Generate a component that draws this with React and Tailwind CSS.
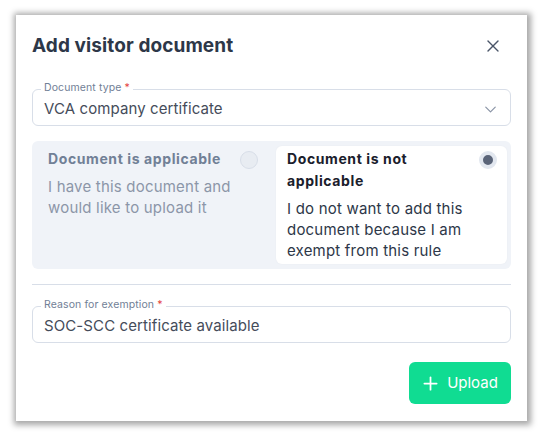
import { X, ChevronDown, Plus } from "lucide-react";

function OutlinedField({ label, value, chevron }) {
  return (
    <div className="relative">
      <div className="absolute -top-[7px] left-[9px] px-[3px] bg-white text-[10.5px] leading-[12px] text-[#718096] tracking-[0.1px]">
        {label} <span className="text-[#e53e3e]">*</span>
      </div>
      <div className="h-[37px] flex items-center justify-between border border-[#d8dee8] rounded-[6px] pl-[11px] pr-[10px] pt-[3px]">
        <span className="text-[15px] text-[#454c5a] tracking-[0.1px]">{value}</span>
        {chevron && <ChevronDown size={19} strokeWidth={1.5} className="text-[#8a94a6]" />}
      </div>
    </div>
  );
}

export default function App() {
  return (
    <div className="w-[542px] h-[435px] bg-white pt-[15px] pl-[16px]" style={{ fontFamily: "Inter, 'Open Sans', sans-serif" }}>
      <div className="w-[511px] h-[406px] bg-white shadow-[1px_1px_6px_3px_rgba(0,0,0,0.35)] px-[16px] pt-[18px]">
        {/* header */}
        <div className="flex items-center justify-between h-[26px]">
          <h1 className="text-[19px] font-bold text-[#2d3748] tracking-[0.1px]">Add visitor document</h1>
          <X size={20} strokeWidth={1.6} className="text-[#4a5568] mr-[8px]" />
        </div>

        <div className="mt-[30px]">
          <OutlinedField label="Document type" value="VCA company certificate" chevron />
        </div>

        {/* radio options */}
        <div className="mt-[15px] bg-[#f0f3f8] rounded-[6px] p-[5px] pr-[4px] flex gap-[6px] h-[128px]">
          <div className="flex-1 pl-[11px] pr-[12px] pt-[2px] flex justify-between">
            <div>
              <div className="text-[14px] font-bold text-[#718096] leading-[22px] tracking-[0.6px]">Document is applicable</div>
              <div className="mt-[6px] text-[15px] leading-[21px] text-[#8c96a8] tracking-[0.2px]">
                I have this document and would like to upload it
              </div>
            </div>
            <div className="w-[18px] h-[18px] rounded-full border border-[#d8dee8] bg-[#e8ecf2] shrink-0 mt-[3px]" />
          </div>
          <div className="w-[231px] bg-white rounded-[6px] pl-[11px] pr-[10px] pt-[2px] flex justify-between shadow-[0_0_2px_rgba(0,0,0,0.04)]">
            <div>
              <div className="text-[14px] font-bold text-[#1a202c] leading-[22px] tracking-[0.6px]">Document is not applicable</div>
              <div className="mt-[6px] text-[15px] leading-[21px] text-[#2d3748] tracking-[0.2px]">
                I do not want to add this document because I am exempt from this rule
              </div>
            </div>
            <div className="w-[18px] h-[18px] rounded-full border-[4px] border-[#e2e7ef] bg-[#5a6478] shrink-0 mt-[3px]" />
          </div>
        </div>

        <div className="mt-[15px] border-t border-[#d8dee8]" />

        <div className="mt-[21px]">
          <OutlinedField label="Reason for exemption" value="SOC-SCC certificate available" />
        </div>

        <div className="mt-[19px] flex justify-end">
          <button className="h-[42px] w-[102px] rounded-[6px] bg-[#10dc92] text-white text-[15px] flex items-center justify-center gap-[6px] pr-[2px]">
            <Plus size={21} strokeWidth={2} />
            Upload
          </button>
        </div>
      </div>
    </div>
  );
}
